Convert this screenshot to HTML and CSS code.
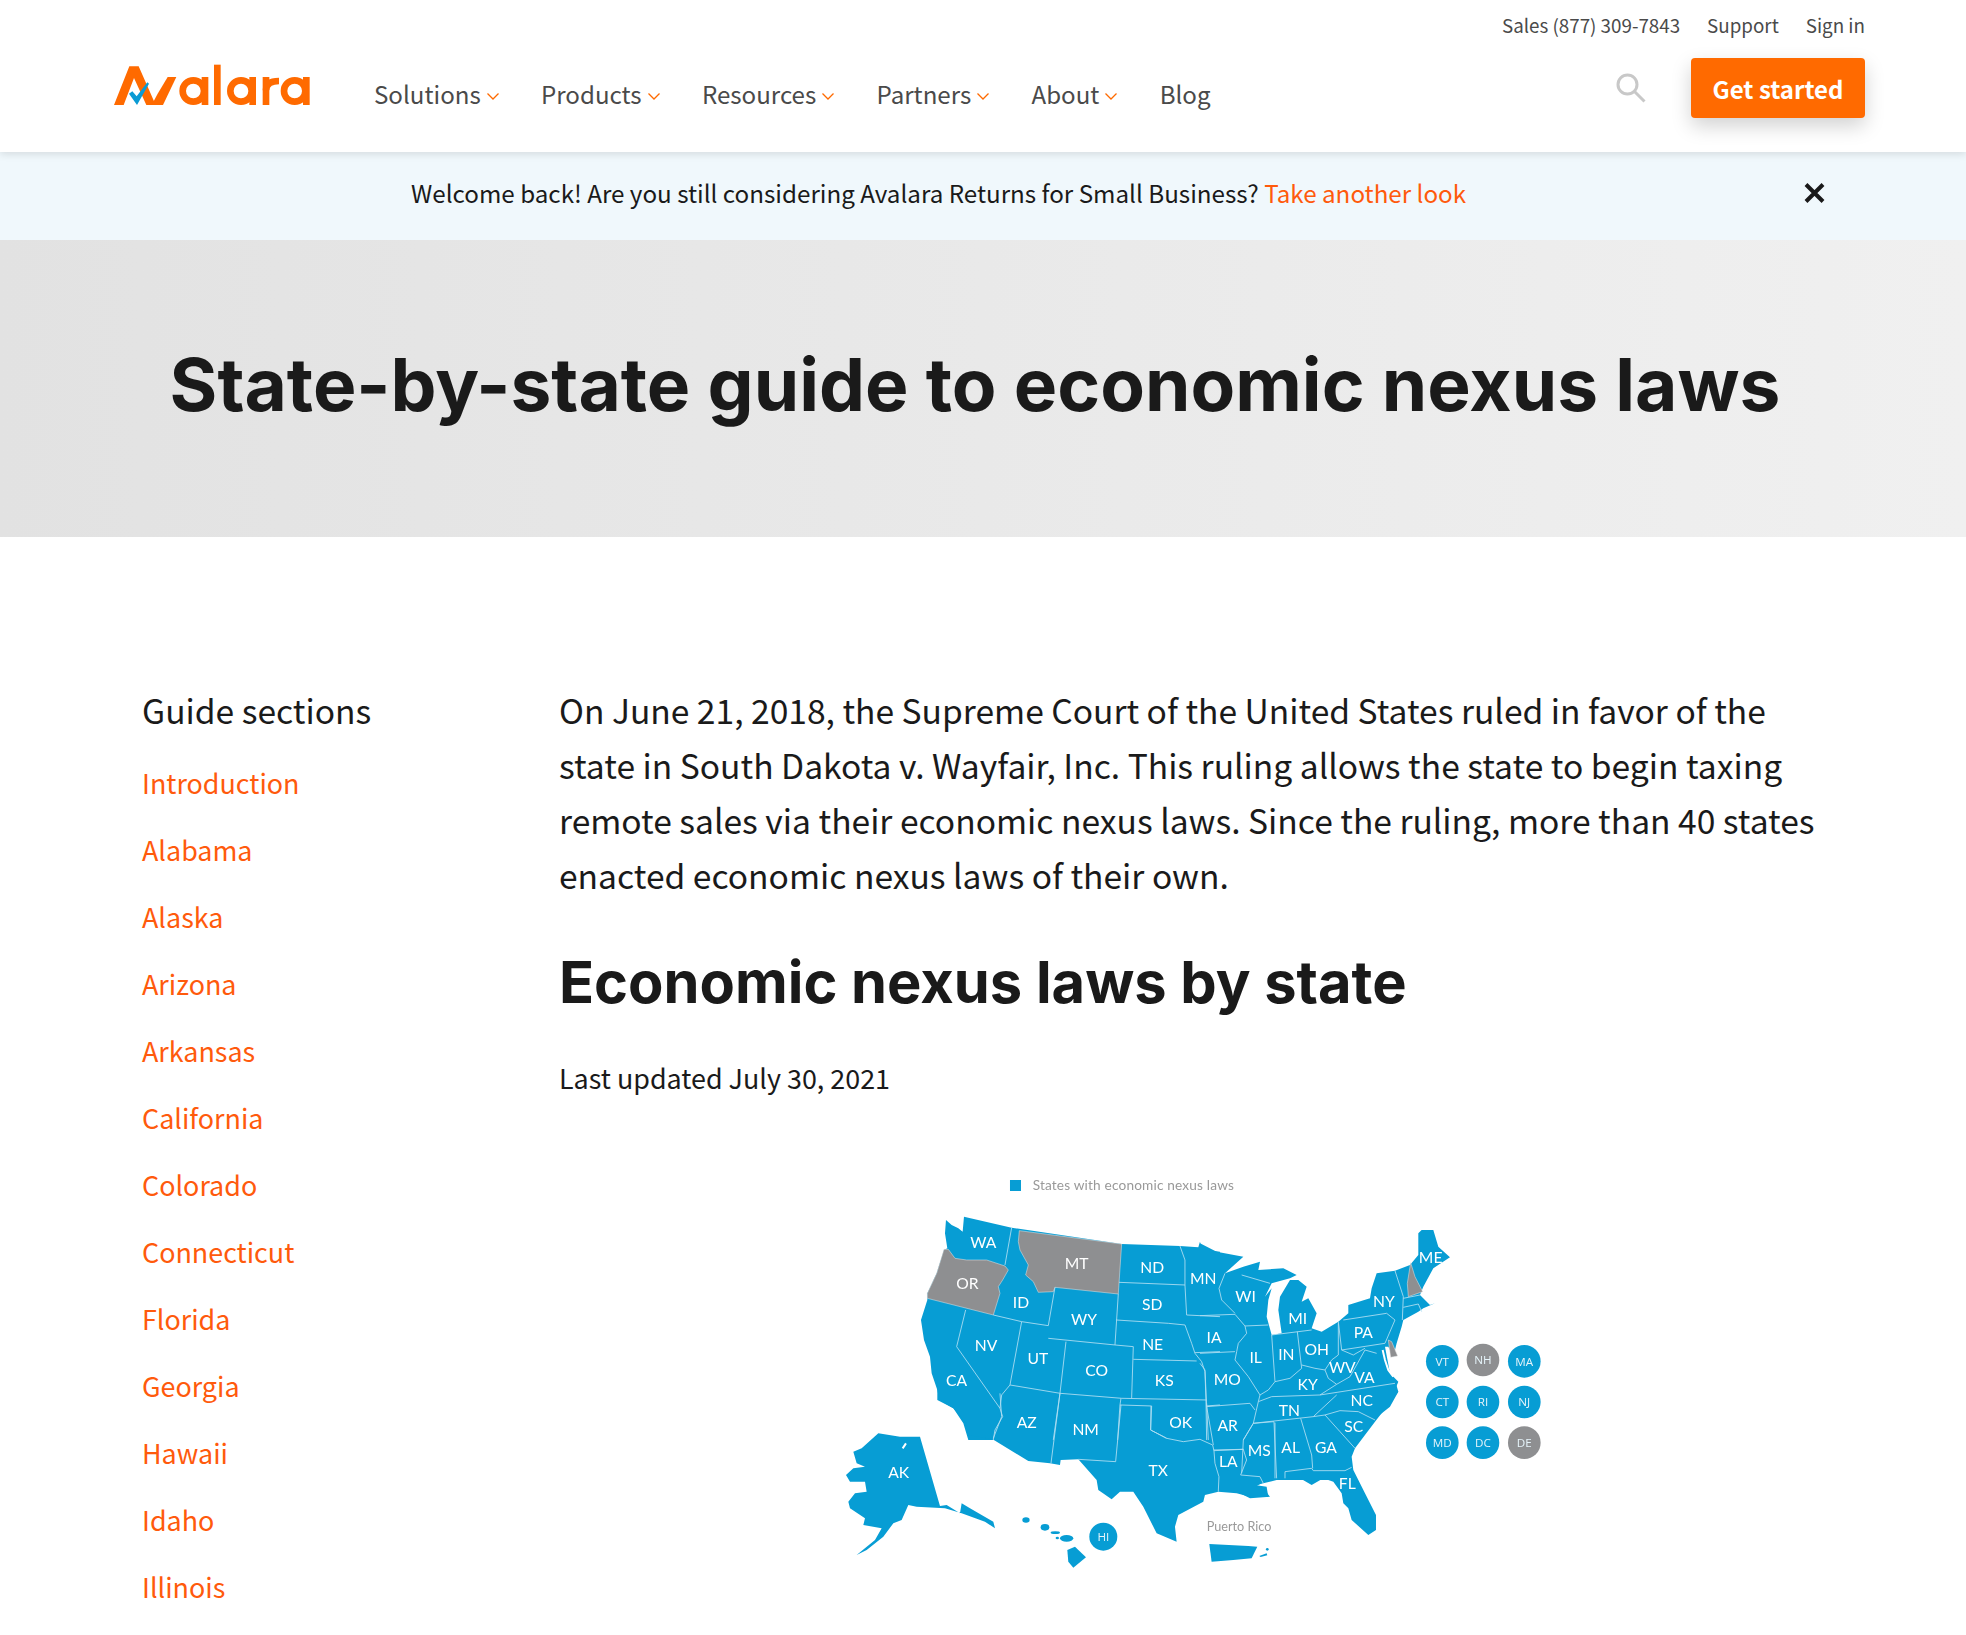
FILE: index.html
```html
<!DOCTYPE html>
<html lang="en">
<head>
<meta charset="utf-8">
<title>State-by-state guide to economic nexus laws</title>
<link rel="stylesheet" href="styles.css">
</head>
<body>
<header class="site-header">
  <div class="top-links">
    <a href="#">Sales (877) 309-7843</a>
    <a href="#">Support</a>
    <a href="#">Sign in</a>
  </div>
  <div class="main-row">
    <a href="#" class="logo" aria-label="Avalara">
      <svg width="215" height="65" viewBox="0 0 645 195">
        <polygon class="lg" points="27,156 73,40 101,40 152,156 124,156 87,75 56,156"/>
        <polygon class="lg" points="140,156 174,156 214,72 188,72 158,122"/>
        <circle class="lgs" cx="265" cy="114" r="32"/><rect class="lg" x="290" y="72" width="20" height="84"/>
        <rect class="lg" x="327" y="35" width="20" height="121"/>
        <circle class="lgs" cx="408" cy="114" r="32"/><rect class="lg" x="433" y="72" width="20" height="84"/>
        <rect class="lg" x="473" y="72" width="20" height="84"/><path class="lgs" d="M483,112 Q483,84 522,84"/>
        <circle class="lgs" cx="569" cy="114" r="32"/><rect class="lg" x="594" y="72" width="20" height="84"/>
        <polygon class="lgb" points="72,122 82,115 95,130 127,88 132,92 96,156"/>
      </svg>
    </a>
    <nav class="main-nav">
      <a href="#">Solutions<svg class="chev" width="12" height="7" viewBox="0 0 12 7"><path d="M.5.5 6 6 11.500.5"/></svg></a>
      <a href="#">Products<svg class="chev" width="12" height="7" viewBox="0 0 12 7"><path d="M.5.5 6 6 11.500.5"/></svg></a>
      <a href="#">Resources<svg class="chev" width="12" height="7" viewBox="0 0 12 7"><path d="M.5.5 6 6 11.500.5"/></svg></a>
      <a href="#">Partners<svg class="chev" width="12" height="7" viewBox="0 0 12 7"><path d="M.5.5 6 6 11.500.5"/></svg></a>
      <a href="#">About<svg class="chev" width="12" height="7" viewBox="0 0 12 7"><path d="M.5.5 6 6 11.500.5"/></svg></a>
      <a href="#">Blog</a>
    </nav>
    <svg class="search" width="30" height="30" viewBox="0 0 30 30"><circle cx="11.500" cy="11.500" r="9.500"/><path d="M18.500 18.500 28.500 28.500"/></svg>
    <a href="#" class="cta">Get started</a>
  </div>
</header>

<div class="banner">
  <p>Welcome back! Are you still considering Avalara Returns for Small Business? <a href="#">Take another look</a></p>
  <svg class="close" width="21" height="20" viewBox="0 0 21 20"><path d="M2 1.500 19 18.500M19 1.500 2 18.500"/></svg>
</div>

<section class="hero"><h1>State-by-state guide to economic nexus laws</h1></section>

<main class="content">
  <aside class="sidebar">
    <h3>Guide sections</h3>
    <ul>
      <li><a href="#">Introduction</a></li>
      <li><a href="#">Alabama</a></li>
      <li><a href="#">Alaska</a></li>
      <li><a href="#">Arizona</a></li>
      <li><a href="#">Arkansas</a></li>
      <li><a href="#">California</a></li>
      <li><a href="#">Colorado</a></li>
      <li><a href="#">Connecticut</a></li>
      <li><a href="#">Florida</a></li>
      <li><a href="#">Georgia</a></li>
      <li><a href="#">Hawaii</a></li>
      <li><a href="#">Idaho</a></li>
      <li><a href="#">Illinois</a></li>
    </ul>
  </aside>
  <article class="article">
    <p class="intro">On June 21, 2018, the Supreme Court of the United States ruled in favor of the state in South Dakota v. Wayfair, Inc. This ruling allows the state to begin taxing remote sales via their economic nexus laws. Since the ruling, more than 40 states enacted economic nexus laws of their own.</p>
    <h2>Economic nexus laws by state</h2>
    <p class="updated">Last updated July 30, 2021</p>
    <svg class="map" width="740" height="440" viewBox="820 1160 740 440">
      <!-- land masses -->
      <g transform="translate(820 1160) scale(.3333)">
        <rect class="blue" x="570" y="60" width="33" height="33"/>
        <text class="legend" x="638" y="90">States with economic nexus laws</text>
        <polygon class="blue" points="378,180 395,195 415,205 428,215 432,170 575,203 905,252 1080,258 1135,262 1140,245 1146,268 1200,275 1200,840 445,840 430,790 400,745 358,720 352,690 335,640 330,590 312,540 303,480 322,420 322,400 350,340 372,270 382,265 375,220"/>
      </g>
      <g transform="translate(820 1380) scale(.3333)">
        <polygon class="blue" points="352,60 400,85 440,130 445,165 518,178 625,243 690,250 720,255 722,240 775,238 830,300 835,330 875,358 900,335 940,335 970,380 1010,460 1070,485 1065,440 1075,405 1150,365 1155,345 1195,335 1250,340 1290,350 1345,350 1340,320 1305,315 1330,310 1370,300 1500,300 1500,0 352,0"/>
        <polygon class="blue" points="78,285 100,265 135,260 110,250 100,215 125,205 175,160 240,170 300,170 360,378 380,375 420,400 425,370 450,385 520,425 525,445 495,425 425,400 375,385 290,380 265,375 245,420 220,430 190,470 140,510 110,525 165,480 185,445 130,435 135,415 90,385 85,365 105,340 140,335 135,305 90,305"/>
        <ellipse class="blue" cx="618" cy="420" rx="11" ry="8"/><ellipse class="blue" cx="675" cy="442" rx="13" ry="10"/>
        <ellipse class="blue" cx="706" cy="458" rx="14" ry="4"/><ellipse class="blue" cx="740" cy="475" rx="20" ry="10"/>
        <ellipse class="blue" cx="712" cy="474" rx="5" ry="4"/>
        <polygon class="blue" points="742,510 765,500 798,532 760,563 745,545"/>
        <circle class="blue" cx="850" cy="470" r="42"/>
        <polygon class="blue" points="1168,492 1285,498 1312,500 1295,535 1240,540 1175,545"/>
        <polygon class="blue" points="1318,528 1340,520 1342,526 1322,531"/><circle class="blue" cx="1342" cy="508" r="4"/>
      </g>
      <g transform="translate(1240 1380) scale(.3333)">
        <polygon class="blue" points="0,0 465,0 475,35 440,80 405,125 345,205 335,230 340,270 375,340 408,405 408,450 385,465 335,420 325,385 310,370 305,340 280,305 250,295 215,315 180,295 115,295 75,305 45,320 70,325 90,350 30,355 0,340"/>
      </g>
      <g transform="translate(1200 1200) scale(.3333)">
        <polygon class="blue" points="0,130 50,155 130,170 75,220 130,200 180,185 175,210 250,205 290,225 270,235 215,250 195,290 215,265 205,300 200,350 215,405 245,400 235,330 240,290 270,240 295,240 320,260 305,305 325,295 350,340 335,385 365,395 415,365 445,340 445,315 510,295 515,265 530,220 585,212 630,195 655,165 655,100 665,90 700,90 715,140 750,172 700,205 670,260 660,285 690,315 705,310 670,325 655,335 610,360 605,380 590,430 580,470 565,440 555,440 570,520 595,545 585,570 595,575 570,620 520,660 480,720 450,760 462,840 0,840"/>
      </g>
      <!-- West -->
      <g transform="translate(820 1160) scale(.3333)">
        <polygon class="gray" points="372,268 385,268 405,295 440,300 500,300 555,318 565,330 548,360 535,380 540,400 520,465 322,415 322,400 350,340"/>
        <polygon class="gray" points="598,212 905,252 895,402 705,382 700,395 655,397 640,365 617,345 625,315 600,270 595,245"/>
        <polyline class="b" points="575,203 555,315"/>
        <polyline class="b" points="705,382 685,497"/>
        <polyline class="b" points="520,465 605,485 685,497"/>
        <polyline class="b" points="605,485 570,675"/>
        <polyline class="b" points="437,450 410,560 540,745"/>
        <polyline class="b" points="570,675 545,705 540,745 548,770 525,810 520,840"/>
        <polyline class="b" points="685,535 885,555"/>
        <polyline class="b" points="895,402 885,555"/>
        <polyline class="b" points="738,545 720,700"/>
        <polyline class="b" points="570,675 720,700 905,715 1160,720"/>
        <polyline class="b" points="885,555 940,560 935,715"/>
        <polyline class="b" points="940,598 1130,603"/>
        <polyline class="b" points="897,367 1095,375"/>
        <polyline class="b" points="1080,258 1095,300 1095,375 1100,465"/>
        <polyline class="b" points="888,480 1045,490 1095,495 1115,550 1125,580 1145,605 1155,635 1158,720 1160,840"/>
        <polyline class="b" points="720,700 700,840"/>
        <polyline class="b" points="903,715 900,735 893,840"/>
        <polyline class="b" points="900,735 995,738 992,810 1040,835"/>
        <polyline class="b" points="1100,465 1200,470"/>
        <polyline class="b" points="1125,578 1200,575"/>
        <polyline class="b" points="1158,738 1200,735"/>
        <text class="st" x="490" y="247">WA</text><text class="st" x="442" y="370">OR</text><text class="st" x="770" y="310">MT</text>
        <text class="st" x="997" y="322">ND</text><text class="st" x="1150" y="353">MN</text><text class="st" x="603" y="425">ID</text>
        <text class="st" x="997" y="433">SD</text><text class="st" x="792" y="478">WY</text><text class="st" x="498" y="556">NV</text>
        <text class="st" x="998" y="553">NE</text><text class="st" x="654" y="594">UT</text><text class="st" x="830" y="629">CO</text>
        <text class="st" x="1033" y="660">KS</text><text class="st" x="410" y="660">CA</text>
      </g>
      <!-- South -->
      <g transform="translate(820 1380) scale(.3333)">
        <polyline class="w" points="248,205 258,190"/>
        <polyline class="b" points="720,40 693,250"/>
        <polyline class="b" points="540,40 545,110 520,175"/>
        <polyline class="b" points="903,75 887,245 775,238"/>
        <polyline class="b" points="993,78 992,150 1040,175 1090,185 1140,178 1178,195 1182,212 1185,250 1197,290 1195,335"/>
        <polyline class="b" points="1160,70 1165,180"/>
        <polyline class="b" points="1182,212 1270,208 1280,240 1262,285 1320,290 1330,310"/>
        <polyline class="b" points="1270,180 1300,130 1362,125 1370,295"/>
        <text class="st" x="620" y="127">AZ</text><text class="st" x="797" y="148">NM</text><text class="st" x="1082" y="127">OK</text>
        <text class="st" x="236" y="275">AK</text><text class="st" x="1015" y="270">TX</text>
        <text class="ci" x="850" y="470">HI</text>
        <text class="pr" x="1160" y="452">Puerto Rico</text>
      </g>
      <!-- Florida and southeast -->
      <g transform="translate(1240 1380) scale(.3333)">
        <polyline class="b" points="105,295 105,128"/>
        <polyline class="b" points="182,115 215,225 218,265"/>
        <polyline class="b" points="135,295 135,275 215,265 220,272 315,272 335,262"/>
        <text class="st" x="322" y="308">FL</text>
      </g>
      <!-- East -->
      <g transform="translate(1200 1200) scale(.3333)">
        <polygon class="gray" points="632,188 645,230 668,275 625,290 622,250"/>
        <polygon class="gray" points="565,420 575,425 593,468 572,472"/>
        <polyline class="w" points="548,450 555,480 565,510 580,530"/>
        <polyline class="b" points="125,225 210,250"/>
        <polyline class="b" points="75,220 57,265 65,300 105,340"/>
        <polyline class="b" points="0,347 105,343 135,378 140,400 115,430 110,455"/>
        <polyline class="b" points="0,460 105,455"/>
        <polyline class="b" points="135,378 205,375"/>
        <polyline class="b" points="215,405 225,545"/>
        <polyline class="b" points="110,455 105,480 145,530 180,585 205,570 225,545"/>
        <polyline class="b" points="292,395 305,505"/>
        <polyline class="b" points="215,405 335,390"/>
        <polyline class="b" points="225,545 270,535 305,505"/>
        <polyline class="b" points="305,495 345,505 375,510 395,480 415,465 415,370"/>
        <polyline class="b" points="415,365 425,450 555,430 585,360 560,340 430,360"/>
        <polyline class="b" points="585,212 610,290 607,360"/>
        <polyline class="b" points="610,295 660,285"/>
        <polyline class="b" points="610,322 655,312 665,335"/>
        <polyline class="b" points="375,510 385,535 410,553 450,530 495,450 530,460"/>
        <polyline class="b" points="425,450 460,465 495,445"/>
        <polyline class="b" points="360,585 410,553"/>
        <polyline class="b" points="175,605 215,590 360,585 585,550"/>
        <polyline class="b" points="180,585 175,605 160,670"/>
        <polyline class="b" points="160,670 340,650 375,645"/>
        <polyline class="b" points="340,650 410,585"/>
        <polyline class="b" points="375,645 420,632 475,635 525,660"/>
        <polyline class="b" points="375,645 420,695 465,745"/>
        <polyline class="b" points="160,670 130,720 125,820"/>
        <polyline class="b" points="40,750 130,748"/>
        <polyline class="b" points="20,620 40,735"/>
        <polyline class="b" points="20,620 150,610 165,630"/>
        <polyline class="b" points="0,490 15,510 20,620"/>
        <text class="st" x="137" y="288">WI</text><text class="st" x="293" y="355">MI</text><text class="st" x="42" y="410">IA</text>
        <text class="st" x="490" y="395">PA</text><text class="st" x="552" y="303">NY</text><text class="st" x="692" y="170">ME</text>
        <text class="st" x="167" y="470">IL</text><text class="st" x="259" y="463">IN</text><text class="st" x="350" y="446">OH</text>
        <text class="st" x="427" y="500">WV</text><text class="st" x="82" y="538">MO</text><text class="st" x="323" y="553">KY</text>
        <text class="st" x="493" y="530">VA</text><text class="st" x="485" y="600">NC</text><text class="st" x="268" y="630">TN</text>
        <text class="st" x="83" y="675">AR</text><text class="st" x="461" y="678">SC</text><text class="st" x="272" y="740">AL</text>
        <text class="st" x="378" y="740">GA</text><text class="st" x="178" y="750">MS</text><text class="st" x="85" y="782">LA</text>
        <circle class="blue" cx="727" cy="484" r="49"/><circle class="gray-c" cx="849" cy="480" r="49"/><circle class="blue" cx="973" cy="484" r="49"/>
        <circle class="blue" cx="727" cy="606" r="49"/><circle class="blue" cx="849" cy="606" r="49"/><circle class="blue" cx="973" cy="606" r="49"/>
        <circle class="blue" cx="727" cy="728" r="49"/><circle class="blue" cx="849" cy="728" r="49"/><circle class="gray-c" cx="973" cy="728" r="49"/>
        <text class="ci" x="727" y="484">VT</text><text class="ci" x="849" y="480">NH</text><text class="ci" x="973" y="484">MA</text>
        <text class="ci" x="727" y="606">CT</text><text class="ci" x="849" y="606">RI</text><text class="ci" x="973" y="606">NJ</text>
        <text class="ci" x="727" y="728">MD</text><text class="ci" x="849" y="728">DC</text><text class="ci" x="973" y="728">DE</text>
      </g>
    </svg>
  </article>
</main>
</body>
</html>
```
FILE: styles.css
```css
* { box-sizing: border-box; }
html, body { margin: 0; padding: 0; }
body {
  font-family: "Noto Sans CJK SC", "Noto Sans", sans-serif;
  color: #1a1a1a;
  background: #fff;
}
a { text-decoration: none; color: inherit; }

.site-header {
  position: relative;
  z-index: 2;
  height: 152px;
  background: #fff;
  box-shadow: 0 2px 8px rgba(0, 0, 0, .12);
  padding: 0 101px 0 105px;
}
.top-links {
  display: flex;
  justify-content: flex-end;
  gap: 27px;
  height: 50px;
  align-items: center;
  font-size: 18.800px;
  line-height: 1;
  color: #4a4a4a;
}
.main-row {
  display: flex;
  align-items: center;
  height: 60px;
  margin-top: 8px;
}
.logo { display: block; height: 65px; margin-top: -5px; }
.logo svg { display: block; }
.lg { fill: #ff6a00; }
.lgs { fill: none; stroke: #ff6a00; stroke-width: 20; }
.lgb { fill: #0a9bd4; }
.main-nav {
  display: flex;
  gap: 42.300px;
  margin-left: 54px;
  padding-top: 12px;
  font-size: 24.100px;
  line-height: 1;
  color: #4a4a4a;
}
.main-nav a { display: flex; align-items: center; gap: 6px; }
.chev { margin-top: 5px; fill: none; stroke: #ff6a00; stroke-width: 1.300; }
.search { margin-left: auto; margin-right: 45px; fill: none; stroke: #c8c8c8; stroke-width: 3; }
.cta {
  width: 174px;
  height: 60px;
  display: flex;
  align-items: center;
  justify-content: center;
  background: #ff6a00;
  color: #fff;
  font-size: 24px;
  font-weight: 700;
  border-radius: 4px;
  box-shadow: 0 8px 20px rgba(0, 0, 0, .18);
}

.banner {
  display: flex;
  align-items: center;
  justify-content: space-between;
  height: 88px;
  padding: 0 141px 6px 411px;
  background: #f0f8fc;
}
.banner p { margin: 0; font-size: 24.200px; line-height: 36px; color: #1a1a1a; }
.banner a { color: #ff5a0c; }
.close { fill: none; stroke: #1a1a1a; stroke-width: 4; }

.hero {
  height: 297px;
  background: linear-gradient(90deg, #e2e2e2, #f0f0f0);
  display: flex;
  align-items: center;
  justify-content: center;
  padding: 0 16px 8px 0;
}
.hero h1 {
  margin: 0;
  font-family: Inter, "Noto Sans", sans-serif;
  font-size: 73px;
  line-height: 1.2;
  font-weight: 700;
  color: #1a1a1a;
}

.content {
  display: grid;
  grid-template-columns: 417px 1262px;
  padding: 144.500px 0 0 142px;
}
.sidebar h3 {
  margin: 0 0 12.500px;
  font-size: 33.600px;
  line-height: 55px;
  font-weight: 400;
}
.sidebar ul { list-style: none; margin: 0; padding: 0; }
.sidebar li { font-size: 26.900px; line-height: 67px; color: #ff5a0c; }
.intro { margin: 0; font-size: 33.600px; line-height: 55px; }
.article h2 {
  margin: 40px 0 0;
  font-family: Inter, "Noto Sans", sans-serif;
  font-size: 57.800px;
  line-height: 80px;
  font-weight: 700;
}
.updated { margin: 36px 0 0; font-size: 26.900px; line-height: 40px; }

.map { display: block; margin: 62.500px 0 0 261px; filter: blur(.35px); }
.blue { fill: #079dd4; }
.gray { fill: #8e8f91; stroke: #e8e8e8; stroke-width: 1.500; }
.gray-c { fill: #8e8f91; }
.b { fill: none; stroke: #b0dff2; stroke-width: 2.600; }
.w { fill: none; stroke: #fff; stroke-width: 6; }
.st, .ci { fill: #fff; text-anchor: middle; dominant-baseline: central; font-family: Lato, sans-serif; }
.st { font-size: 47px; }
.ci { font-size: 35px; font-family: "Open Sans", sans-serif; fill: #e6f4fa; }
.legend { font-family: Lato, sans-serif; font-size: 41px; fill: #999; letter-spacing: .5px; }
.pr { font-family: Lato, sans-serif; font-size: 38px; fill: #999; }
```
